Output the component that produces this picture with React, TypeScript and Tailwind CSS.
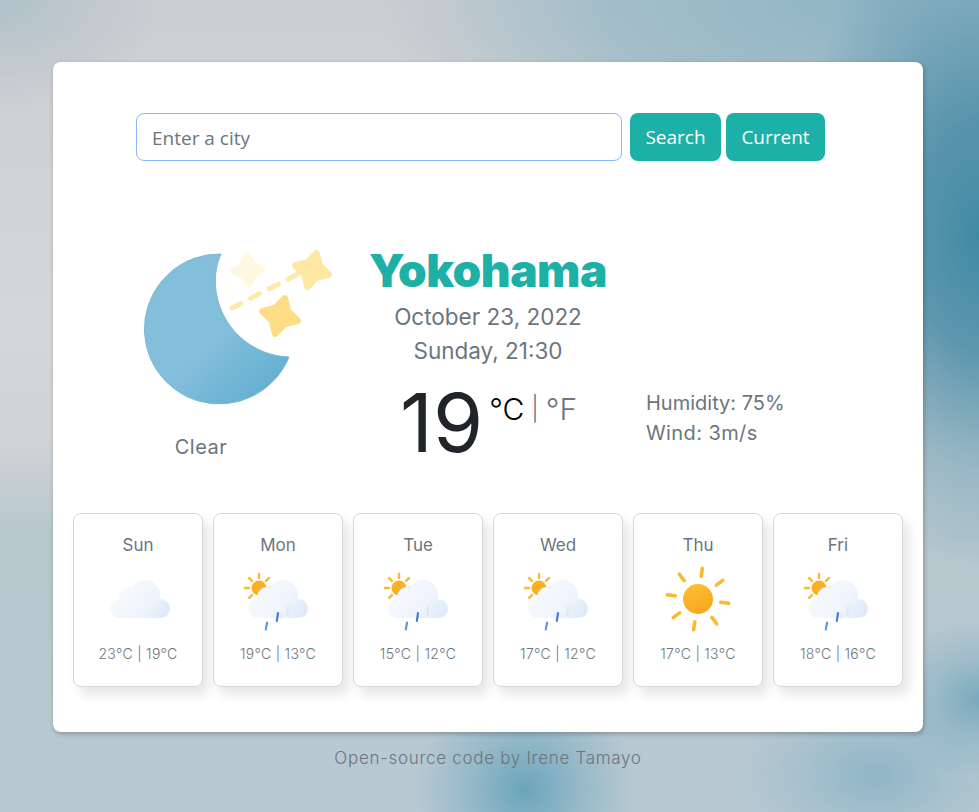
const starPoints = (cx: number, cy: number, r: number, rot: number) => {
  const pts: string[] = [];
  for (let i = 0; i < 8; i++) {
    const rad = i % 2 === 0 ? r : r * 0.5;
    const a = ((rot + i * 45 - 90) * Math.PI) / 180;
    pts.push(`${(cx + rad * Math.cos(a)).toFixed(1)},${(cy + rad * Math.sin(a)).toFixed(1)}`);
  }
  return pts.join(" ");
};

const MoonIcon = () => (
  <svg width="200" height="165" viewBox="135 245 200 165">
    <defs>
      <linearGradient id="moon" x1="170" y1="290" x2="275" y2="400" gradientUnits="userSpaceOnUse">
        <stop offset="0.45" stopColor="#83bedb" />
        <stop offset="1" stopColor="#5fadd0" />
      </linearGradient>
    </defs>
    <path
      d="M221 254 A75 75 0 1 0 289 357 C262 356 238 341 225 318 C214 298 212 274 221 254 Z"
      fill="url(#moon)"
      stroke="#7cb8d6"
      strokeWidth="1"
    />
    <path d="M232 308 L300 273" stroke="#fde9a9" strokeWidth="5" strokeLinecap="round" strokeDasharray="10 11" fill="none" />
    <polygon points={starPoints(248, 270, 14, -5)} fill="#fff8e1" stroke="#fff8e1" strokeWidth="7" strokeLinejoin="round" />
    <polygon points={starPoints(312, 270, 17, 15)} fill="#fee6a3" stroke="#fee6a3" strokeWidth="7" strokeLinejoin="round" />
    <polygon points={starPoints(280, 316, 18, 15)} fill="#fedd86" stroke="#fedd86" strokeWidth="7" strokeLinejoin="round" />
  </svg>
);

const Cloud = ({ x, y }: { x: number; y: number }) => (
  <g transform={`translate(${x} ${y})`} fill="url(#cloudFill)">
    <circle cx="9.5" cy="28.5" r="9.5" />
    <circle cx="19" cy="17" r="10" />
    <circle cx="35" cy="15" r="15" />
    <circle cx="50.5" cy="28.5" r="9.5" />
    <rect x="9.5" y="19" width="41" height="19" />
  </g>
);

const CloudDefs = ({ x, y }: { x: number; y: number }) => (
  <defs>
    <linearGradient id="cloudFill" x1="10" y1="5" x2="55" y2="40" gradientUnits="userSpaceOnUse">
      <stop offset="0" stopColor="#f7fafe" />
      <stop offset="0.6" stopColor="#eef4fc" />
      <stop offset="1" stopColor="#dce8f9" />
    </linearGradient>
    <linearGradient id="sunFill" x1={x} y1={y} x2={x + 10} y2={y + 20} gradientUnits="userSpaceOnUse">
      <stop offset="0" stopColor="#fdbe30" />
      <stop offset="1" stopColor="#fab024" />
    </linearGradient>
  </defs>
);

const Rays = ({ cx, cy, from, to, width, rot }: { cx: number; cy: number; from: number; to: number; width: number; rot: number }) => (
  <g stroke="#fbb92f" strokeWidth={width} strokeLinecap="round">
    {[0, 45, 90, 135, 180, 225, 270, 315].map((d) => {
      const a = ((d + rot) * Math.PI) / 180;
      return (
        <line
          key={d}
          x1={cx + from * Math.cos(a)}
          y1={cy + from * Math.sin(a)}
          x2={cx + to * Math.cos(a)}
          y2={cy + to * Math.sin(a)}
        />
      );
    })}
  </g>
);

const WeatherIcon = ({ type }: { type: string }) => {
  if (type === "cloud") {
    return (
      <svg width="70" height="70" viewBox="0 0 70 70" className="mt-[8px]">
        <CloudDefs x={0} y={0} />
        <Cloud x={7} y={15} />
      </svg>
    );
  }
  if (type === "sun") {
    return (
      <svg width="70" height="70" viewBox="0 0 70 70" className="mt-[8px]">
        <defs>
          <linearGradient id="bigSun" x1="28" y1="20" x2="42" y2="50" gradientUnits="userSpaceOnUse">
            <stop offset="0" stopColor="#fdbe30" />
            <stop offset="1" stopColor="#f7a41e" />
          </linearGradient>
        </defs>
        <Rays cx={35} cy={34} from={23} to={31} width={3.6} rot={8} />
        <circle cx="35" cy="34" r="15" fill="url(#bigSun)" />
      </svg>
    );
  }
  return (
    <svg width="70" height="70" viewBox="0 0 70 70" className="mt-[8px]">
      <CloudDefs x={10} y={14} />
      <Rays cx={16} cy={23} from={10} to={14} width={2.4} rot={0} />
      <circle cx="16" cy="23" r="7.5" fill="url(#sunFill)" />
      <Cloud x={5} y={15} />
      <line x1="45" y1="42" x2="44.4" y2="50" stroke="#dfe8f5" strokeWidth="2" strokeLinecap="round" />
      <line x1="35" y1="48" x2="33.8" y2="56" stroke="#3f82d9" strokeWidth="2.2" strokeLinecap="round" />
      <line x1="24" y1="57.5" x2="22.8" y2="64.5" stroke="#5d97de" strokeWidth="2.2" strokeLinecap="round" />
    </svg>
  );
};

const forecast = [
  { day: "Sun", icon: "cloud", temp: "23°C | 19°C" },
  { day: "Mon", icon: "rain", temp: "19°C | 13°C" },
  { day: "Tue", icon: "rain", temp: "15°C | 12°C" },
  { day: "Wed", icon: "rain", temp: "17°C | 12°C" },
  { day: "Thu", icon: "sun", temp: "17°C | 13°C" },
  { day: "Fri", icon: "rain", temp: "18°C | 16°C" },
];

export default function App() {
  return (
    <div className="min-h-[812px] pt-[62px] font-['Inter',sans-serif] text-[#6c757d] bg-[radial-gradient(ellipse_190px_330px_at_100%_29%,#3f8aa3_0%,rgba(72,140,167,0.85)_35%,rgba(90,150,175,0.45)_70%,transparent_100%),radial-gradient(ellipse_480px_210px_at_88%_0%,#8fb5c4_0%,rgba(143,181,196,0.65)_55%,transparent_100%),radial-gradient(ellipse_110px_110px_at_525px_790px,rgba(98,161,185,0.9)_0%,rgba(98,161,185,0.4)_50%,transparent_100%),radial-gradient(ellipse_140px_90px_at_875px_775px,rgba(133,176,195,0.8)_0%,rgba(133,176,195,0.35)_50%,transparent_100%),radial-gradient(ellipse_100px_80px_at_979px_700px,rgba(111,165,186,0.85)_0%,rgba(111,165,186,0.35)_50%,transparent_100%),radial-gradient(ellipse_160px_110px_at_0%_0%,#b0c1c9_0%,transparent_100%),linear-gradient(180deg,#ccced1_0%,#d5d6d8_40%,#cfd3d5_55%,#b6c7ce_66%,#b8c9d2_100%)]">
      <div className="w-[870px] ml-[53px] h-[670px] bg-white rounded-lg shadow-[1px_2px_5px_rgba(0,0,0,0.25)] pt-[51px]">
        {/* search */}
        <form className="flex ml-[83px] h-12">
          <input
            type="text"
            placeholder="Enter a city"
            className="w-[486px] h-12 px-[15px] pt-[2px] border border-[#86b7fe] rounded-lg text-[19px] font-['Open_Sans',sans-serif] outline-none placeholder:text-[#6c757d]"
          />
          <button type="button" className="w-[91px] h-12 ml-2 pt-[1px] bg-[#1cb0a6] text-white rounded-lg text-[19px] font-['Open_Sans',sans-serif]">
            Search
          </button>
          <button type="button" className="w-[99px] h-12 ml-[5px] pt-[1px] bg-[#1cb0a6] text-white rounded-lg text-[19px] font-['Open_Sans',sans-serif]">
            Current
          </button>
        </form>

        {/* current weather */}
        <div className="flex ml-[82px] mt-[84px] h-[268px]">
          <div className="w-[200px]">
            <MoonIcon />
            <p className="w-[132px] mt-[22px] text-center text-[20px] leading-[30px] tracking-[0.5px]">Clear</p>
          </div>
          <div>
            <div className="w-[306px] text-center">
              <h1 className="text-[46px] leading-[50px] font-black text-[#1cb0a6] tracking-[-0.5px]">Yokohama</h1>
              <p className="text-[22.5px] leading-[34px] mt-[5px]">October 23, 2022</p>
              <p className="text-[22.5px] leading-[34px]">Sunday, 21:30</p>
            </div>
            <div className="flex mt-[5px]">
              <div className="w-[311px] pl-[65px] flex items-start">
                <span className="text-[81px] leading-[100px] text-[#212529]">19</span>
                <span className="text-[30px] leading-[40px] mt-[16px] ml-[6px] text-black font-light">°C</span>
                <span className="text-[24px] leading-[40px] mt-[16px] ml-[7px] font-light">|</span>
                <span className="text-[30px] leading-[40px] mt-[16px] ml-[7px] font-light">°F</span>
              </div>
              <div className="text-[20px] leading-[30px] mt-[15px]">
                <p>Humidity: 75%</p>
                <p className="tracking-[0.4px]">Wind: 3m/s</p>
              </div>
            </div>
          </div>
        </div>

        {/* forecast */}
        <div className="flex gap-[10px] ml-[20px]">
          {forecast.map((f) => (
            <div
              key={f.day}
              className="w-[130px] h-[174px] border border-[#d5d7da] rounded-lg bg-white shadow-[6px_8px_12px_rgba(0,0,0,0.1)] flex flex-col items-center pt-[19px]"
            >
              <p className="text-[17px] leading-6">{f.day}</p>
              <WeatherIcon type={f.icon} />
              <p className="text-[14px] leading-5 mt-[9px] font-light tracking-[0.3px]">{f.temp}</p>
            </div>
          ))}
        </div>
      </div>
      <p className="w-[870px] ml-[53px] mt-[14px] text-center text-[17px] leading-6 font-light tracking-[0.7px]">Open-source code by Irene Tamayo</p>
    </div>
  );
}
